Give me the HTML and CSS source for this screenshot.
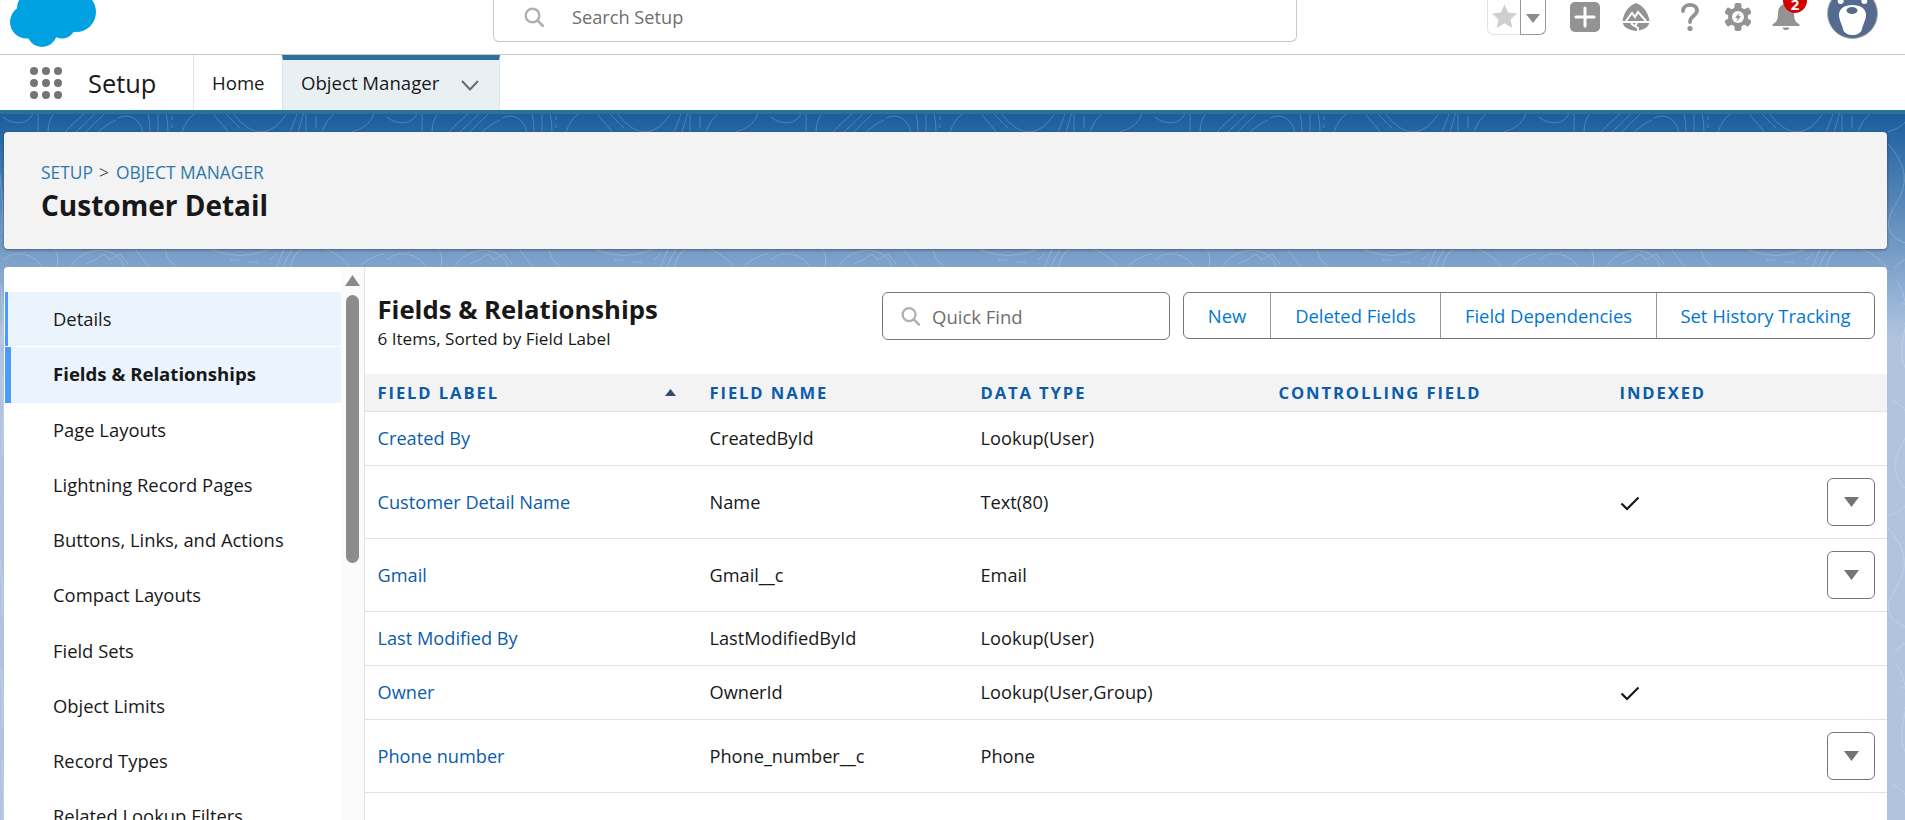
FILE: index.html
```html
<!DOCTYPE html>
<html lang="en">
<head>
<meta charset="utf-8">
<title>Customer Detail | Object Manager | Setup</title>
<link rel="stylesheet" href="styles.css">
</head>
<body>
<header class="topbar">
  <svg class="logo" viewBox="10 0 87 47" aria-label="Salesforce"><g fill="#00a1e0"><circle cx="26.500" cy="22" r="16.500"/><circle cx="42" cy="32" r="15"/><circle cx="62" cy="25" r="13.500"/><circle cx="76" cy="12" r="20"/><circle cx="50" cy="6" r="20"/><circle cx="33" cy="8" r="16"/></g></svg>
  <div class="global-search">
    <svg class="search-icon" viewBox="0 0 20 20"><circle cx="8.500" cy="8.500" r="6.800" fill="none" stroke="#b0b0b0" stroke-width="2.400"/><path d="M13.500 13.500 19 19" stroke="#b0b0b0" stroke-width="2.600" stroke-linecap="round"/></svg>
    <span>Search Setup</span>
  </div>
  <div class="actions">
    <div class="fav">
      <span class="fav-star"><svg viewBox="0 0 24 24"><path fill="#cfcfcf" d="M12 .5l3.600 7.600 8.400 1-6.200 5.700 1.700 8.300L12 18.400l-7.500 4.700 1.700-8.300L0 9.100l8.400-1z"/></svg></span>
      <span class="fav-menu"><svg viewBox="0 0 14 9"><path fill="#8c8c8c" d="M0 0h14L7 9z"/></svg></span>
    </div>
    <svg class="act act-plus" viewBox="0 0 30 30"><rect width="30" height="30" rx="5" fill="#939393"/><path d="M15 6v18M6 15h18" stroke="#fff" stroke-width="3" stroke-linecap="round"/></svg>
    <svg class="act act-trail" viewBox="0 0 28 28"><path fill="#939393" d="M14 0C20 2 26 8 27.500 18H.5C2 8 8 2 14 0z"/><path fill="#939393" d="M.8 20H27.200C26 25 21 27 14 28 7 27 2 25 .8 20z"/><path fill="none" stroke="#fff" stroke-width="2" d="M4 18l6-8 3 4 3-5 8 9M15 20l-2 3 3 2v3M9 20l3 3"/></svg>
    <svg class="act act-help" viewBox="0 0 18 28"><path fill="none" stroke="#939393" stroke-width="3.800" stroke-linecap="round" d="M2 8C2 0 16 0 16 7.500 16 13 9 12.500 9 19"/><circle cx="9" cy="25.500" r="2.600" fill="#939393"/></svg>
    <svg class="act act-gear" viewBox="0 0 26 28"><g fill="#939393"><rect x="9.500" y="0" width="7" height="28" rx="2"/><rect x="9.500" y="0" width="7" height="28" rx="2" transform="rotate(60 13 14)"/><rect x="9.500" y="0" width="7" height="28" rx="2" transform="rotate(120 13 14)"/><circle cx="13" cy="14" r="10"/></g><circle cx="13" cy="14" r="6" fill="#fff"/><path fill="#939393" d="M14.500 9.500 10 15h2.500l-1 3.800L16 13h-2.500z"/></svg>
    <div class="bell">
      <svg class="bell-icon" viewBox="0 0 28 26"><path fill="#939393" d="M14 0c5 0 8 4 8 9 0 6 1 9 5 11 1 .5 1 2-.5 2H1.500C0 22 0 20.500 1 20c4-2 5-5 5-11 0-5 3-9 8-9z"/><path fill="#939393" d="M10.500 23.500h7c-.5 2-2 2.500-3.500 2.500s-3-.5-3.500-2.500z"/></svg>
      <span class="badge">2</span>
    </div>
    <svg class="act act-avatar" viewBox="0 0 51 39"><circle cx="25.500" cy="13.500" r="25" fill="#546a8e" stroke="#a9adb3" stroke-width="1"/><circle cx="13.700" cy="1" r="3" fill="#fff"/><circle cx="37.300" cy="1" r="3" fill="#fff"/><path fill="#fff" d="M25.500 5C34 5 39 9 39 15 39 20 36 24 35 29 34 33 30 35 25.500 35 21 35 17 33 16 29 15 24 12 20 12 15 12 9 17 5 25.500 5z"/><ellipse cx="25" cy="10.500" rx="5.500" ry="3.500" fill="#546a8e"/></svg>
  </div>
</header>

<nav class="navbar">
  <svg class="launcher" viewBox="0 0 32 32"><g fill="#757575"><circle cx="4" cy="4" r="4"/><circle cx="16" cy="4" r="4"/><circle cx="28" cy="4" r="4"/><circle cx="4" cy="16" r="4"/><circle cx="16" cy="16" r="4"/><circle cx="28" cy="16" r="4"/><circle cx="4" cy="28" r="4"/><circle cx="16" cy="28" r="4"/><circle cx="28" cy="28" r="4"/></g></svg>
  <span class="app-name">Setup</span>
  <a class="tab tab-home">Home</a>
  <a class="tab tab-active">Object Manager<svg class="chev" viewBox="0 0 18 11"><path d="M1 1l8 8.500L17 1" fill="none" stroke="#6b6b6b" stroke-width="2"/></svg></a>
</nav>

<main class="backdrop">
  <svg class="contours" width="100%" height="100%" aria-hidden="true">
    <defs>
      <pattern id="topo" width="384" height="384" patternUnits="userSpaceOnUse">
        <g fill="none" stroke="#fff" stroke-opacity=".2" stroke-width="1">
          <path d="M3 3Q12 11 24 8 32 5 33 -2M38 -2V18M48 18Q48 6 55 -2M65 18Q74 8 86 -2M76 18L97 -2M86 18L106 -2M98 18Q108 9 116 6M118 4Q126 0 134 4Q140 8 143 18"/>
          <path d="M148 -2Q150 8 150 18M158 -2V18M166 -2Q168 8 168 18M172 2V6M172 10V14M182 18Q186 6 196 -2M212 -2L228 18M224 -2L240 14M232 -2Q262 38 288 -2M290 18L298 -2M298 18L304 -2M306 18V-2M316 2V14M322 18Q326 6 336 -2M352 18Q372 12 374 -2"/>
          <path d="M3 146Q14 136 30 142 42 148 44 160M55 135Q60 145 56 154M70 154Q78 138 100 136 122 138 124 154M86 150Q96 146 104 140L110 146 120 140 128 150"/>
          <path d="M135 135L150 154M165 135Q166 146 178 154M210 135Q240 148 270 135M230 146H240M248 148H258M270 146L276 140M284 135L276 154M292 135L282 154M302 135Q292 142 290 154M326 135Q348 146 350 154M358 154Q370 142 384 140"/>
          <path d="M0 60Q4 90 2 120M1 170Q4 200 2 230M2 260Q5 300 2 340M352 30Q380 60 360 90T372 130M360 165Q376 190 368 220T380 270M356 286Q384 300 366 330T376 380M364 190H378M368 210H376"/>
        </g>
      </pattern>
    </defs>
    <rect width="100%" height="100%" fill="url(#topo)"/>
  </svg>

  <section class="page-head">
    <div class="crumbs"><a>SETUP</a><span class="crumb-sep">&gt;</span><a>OBJECT MANAGER</a></div>
    <h1>Customer Detail</h1>
  </section>

  <section class="panel">
    <aside class="side">
      <ul class="side-list">
        <li class="side-item is-hover">Details</li>
        <li class="side-item is-active">Fields &amp; Relationships</li>
        <li class="side-item">Page Layouts</li>
        <li class="side-item">Lightning Record Pages</li>
        <li class="side-item">Buttons, Links, and Actions</li>
        <li class="side-item">Compact Layouts</li>
        <li class="side-item">Field Sets</li>
        <li class="side-item">Object Limits</li>
        <li class="side-item">Record Types</li>
        <li class="side-item">Related Lookup Filters</li>
      </ul>
      <div class="scroll">
        <svg class="scroll-up" viewBox="0 0 15 11"><path d="M7.500 0 15 11H0z" fill="#8a8a8a"/></svg>
        <div class="scroll-thumb"></div>
      </div>
    </aside>

    <div class="content">
      <div class="toolbar">
        <div class="title-block">
          <h2>Fields &amp; Relationships</h2>
          <p>6 Items, Sorted by Field Label</p>
        </div>
        <div class="quick-find">
          <svg class="qf-icon" viewBox="0 0 20 20"><circle cx="8.500" cy="8.500" r="6.800" fill="none" stroke="#b0b0b0" stroke-width="2.400"/><path d="M13.500 13.500 19 19" stroke="#b0b0b0" stroke-width="2.600" stroke-linecap="round"/></svg>
          <span>Quick Find</span>
        </div>
        <div class="btn-group">
          <a class="btn">New</a>
          <a class="btn">Deleted Fields</a>
          <a class="btn">Field Dependencies</a>
          <a class="btn">Set History Tracking</a>
        </div>
      </div>

      <table class="grid">
        <colgroup><col class="c1"><col class="c2"><col class="c3"><col class="c4"><col class="c5"><col class="c6"></colgroup>
        <thead>
          <tr>
            <th><span class="th-sort">FIELD LABEL<svg class="sort" viewBox="0 0 11 7"><path d="M5.500 0 11 7H0z" fill="#2e4f75"/></svg></span></th>
            <th>FIELD NAME</th><th>DATA TYPE</th><th>CONTROLLING FIELD</th><th>INDEXED</th><th></th>
          </tr>
        </thead>
        <tbody>
          <tr class="r-s"><td><a>Created By</a></td><td>CreatedById</td><td>Lookup(User)</td><td></td><td></td><td></td></tr>
          <tr class="r-l"><td><a>Customer Detail Name</a></td><td>Name</td><td>Text(80)</td><td></td><td><svg class="check" viewBox="0 0 20 15"><path d="M1.500 7.500 7 13 18.500 1.500" fill="none" stroke="#181818" stroke-width="2.200"/></svg></td><td><span class="row-btn"><svg viewBox="0 0 15 10"><path d="M0 0h15L7.500 10z" fill="#747474"/></svg></span></td></tr>
          <tr class="r-l"><td><a>Gmail</a></td><td>Gmail__c</td><td>Email</td><td></td><td></td><td><span class="row-btn"><svg viewBox="0 0 15 10"><path d="M0 0h15L7.500 10z" fill="#747474"/></svg></span></td></tr>
          <tr class="r-s"><td><a>Last Modified By</a></td><td>LastModifiedById</td><td>Lookup(User)</td><td></td><td></td><td></td></tr>
          <tr class="r-s"><td><a>Owner</a></td><td>OwnerId</td><td>Lookup(User,Group)</td><td></td><td><svg class="check" viewBox="0 0 20 15"><path d="M1.500 7.500 7 13 18.500 1.500" fill="none" stroke="#181818" stroke-width="2.200"/></svg></td><td></td></tr>
          <tr class="r-l"><td><a>Phone number</a></td><td>Phone_number__c</td><td>Phone</td><td></td><td></td><td><span class="row-btn"><svg viewBox="0 0 15 10"><path d="M0 0h15L7.500 10z" fill="#747474"/></svg></span></td></tr>
        </tbody>
      </table>
    </div>
  </section>
</main>
</body>
</html>
```

FILE: styles.css
```css
* { box-sizing: border-box; }
html, body { margin: 0; height: 820px; overflow: hidden; }
body {
  display: flex;
  flex-direction: column;
  background: #fff;
  color: #181818;
  font-family: "Open Sans", "Noto Sans", Arial, sans-serif;
  font-size: 18px;
}
svg { display: block; }
a { color: inherit; text-decoration: none; }
h1, h2, p, ul { margin: 0; padding: 0; }

/* top bar */
.topbar {
  flex: none;
  height: 55px;
  display: flex;
  align-items: flex-start;
  padding-left: 10px;
  border-bottom: 1px solid #c9c9c9;
}
.logo { width: 87px; height: 47px; flex: none; }
.global-search {
  flex: none;
  width: 804px;
  height: 42px;
  margin-left: 396px;
  display: flex;
  align-items: flex-start;
  padding: 7px 0 0 30px;
  border: 1px solid #c9c9c9;
  border-top: 0;
  border-radius: 0 0 6px 6px;
  color: #706e6b;
  font-size: 18.200px;
  line-height: 20px;
}
.search-icon { width: 20px; height: 20px; margin-right: 28px; }
.actions { display: flex; align-items: flex-start; margin-left: 190px; }
.fav {
  display: flex;
  width: 59px;
  height: 35px;
  margin-right: 24px;
}
.fav-star {
  width: 33px;
  border: 1px solid #e4e4e4;
  border-top: 0;
  border-right: 0;
  border-radius: 0 0 0 6px;
  padding: 4px 0 0 4px;
}
.fav-star svg { width: 25px; height: 25px; }
.fav-menu {
  width: 26px;
  border: 1px solid #9a9a9a;
  border-top: 0;
  border-radius: 0 0 6px 0;
  padding: 14px 0 0 5px;
}
.fav-menu svg { width: 14px; height: 9px; }
.act { flex: none; }
.act-plus { width: 30px; height: 30px; margin-top: 2px; margin-right: 22px; }
.act-trail { width: 28px; height: 28px; margin-top: 3px; margin-right: 31px; }
.act-help { width: 18px; height: 28px; margin-top: 3px; margin-right: 26px; }
.act-gear { width: 26px; height: 28px; margin-top: 3px; margin-right: 21px; }
.bell { position: relative; width: 28px; height: 31px; margin-right: 27px; }
.bell-icon { width: 28px; height: 26px; margin-top: 4px; }
.badge {
  position: absolute;
  left: 11px;
  top: -12px;
  width: 24px;
  height: 25px;
  padding-top: 7px;
  border-radius: 50%;
  background: #d30000;
  color: #fff;
  font-size: 15px;
  font-weight: 700;
  line-height: 18px;
  text-align: center;
}
.act-avatar { width: 51px; height: 39px; }

/* app nav */
.navbar {
  flex: none;
  height: 59px;
  display: flex;
  align-items: stretch;
  border-bottom: 4px solid #2b719c;
}
.launcher { width: 32px; height: 32px; margin: 12px 0 0 30px; }
.app-name {
  width: 105px;
  margin-left: 26px;
  padding-top: 12px;
  font-size: 25.400px;
  line-height: 32px;
}
.tab {
  display: flex;
  align-items: center;
  border-left: 1px solid #e3e3e3;
  font-size: 18.600px;
}
.tab-home { width: 89px; padding-left: 18px; }
.tab-active {
  width: 218px;
  padding-left: 18px;
  background: #e9f0f4;
  border-top: 5px solid #2b719c;
  border-right: 1px solid #dfe5e9;
  padding-bottom: 5px;
}
.chev { width: 18px; height: 11px; margin: 5px 0 0 22px; }

/* backdrop */
.backdrop {
  position: relative;
  flex: 1;
  min-height: 0;
  display: flex;
  flex-direction: column;
  padding: 18px 18px 0 4px;
  background: linear-gradient(#1b5e9e 0, #b0c4e0 225px);
  overflow: hidden;
}
.contours { position: absolute; inset: 0; }

.page-head {
  position: relative;
  flex: none;
  height: 117px;
  padding: 28px 37px 0;
  background: #f3f3f3;
  border-radius: 4px;
  box-shadow: 0 1px 3px rgba(0, 0, 0, .4);
}
.crumbs { color: #2e78ab; font-size: 17.400px; line-height: 24px; }
.crumb-sep { color: #5c5c5c; margin: 0 7px 0 6px; }
h1 { font-size: 28px; line-height: 38px; font-weight: 700; margin-top: 2px; }

.panel {
  position: relative;
  flex: 1;
  min-height: 0;
  display: flex;
  margin-top: 18px;
  background: #fff;
  border-radius: 4px 4px 0 0;
  overflow: hidden;
}

/* sidebar */
.side {
  flex: none;
  width: 361px;
  display: flex;
  border-right: 1px solid #e3e3e3;
}
.side-list { list-style: none; width: 337px; padding: 25px 0 0 1px; }
.side-item {
  height: 55.250px;
  line-height: 54px;
  padding-left: 48px;
  font-size: 18.400px;
  white-space: nowrap;
}
.is-hover { background: #ebf4fd; box-shadow: inset 3px 0 #4a9bff; height: 54px; margin-bottom: 1.250px; }
.is-active { background: #ebf4fd; box-shadow: inset 6px 0 #4a9bff; font-size: 18.600px; font-weight: 700; }
.scroll { flex: 1; background: #fbfbfb; padding: 8px 0 0 4px; }
.scroll-up { width: 15px; height: 11px; }
.scroll-thumb { width: 13px; height: 268px; margin: 9px 0 0 1px; background: #8c8c8c; border-radius: 7px; }

/* content */
.content { flex: 1; min-width: 0; }
.toolbar {
  height: 107px;
  display: flex;
  align-items: flex-start;
  padding: 25px 12px 0 12.500px;
}
.title-block { flex: none; width: 504.500px; }
h2 { font-size: 25.700px; line-height: 35px; font-weight: 700; white-space: nowrap; }
.title-block p { font-size: 17.100px; line-height: 24px; }
.quick-find {
  flex: none;
  width: 288px;
  height: 48px;
  display: flex;
  align-items: center;
  padding-left: 18px;
  border: 1px solid #767676;
  border-radius: 6px;
  color: #706e6b;
  font-size: 18.500px;
}
.qf-icon { width: 19px; height: 20px; margin-right: 12px; }
.btn-group {
  flex: none;
  width: 692px;
  height: 47px;
  margin-left: 13px;
  display: grid;
  grid-template-columns: 86px 170px 216px 1fr;
  border: 1px solid #767676;
  border-radius: 6px;
}
.btn {
  display: flex;
  align-items: center;
  justify-content: center;
  border-left: 1px solid #9a9a9a;
  color: #0176d3;
  font-size: 18.400px;
}
.btn:first-child { border-left: 0; }

/* table */
.grid { width: 100%; border-collapse: collapse; table-layout: fixed; }
.c1 { width: 332px; }
.c2 { width: 271px; }
.c3 { width: 298px; }
.c4 { width: 341px; }
.c5 { width: 207px; }
.grid th {
  height: 37px;
  padding: 0 0 0 12.500px;
  background: #f3f3f3;
  border-bottom: 1px solid #e3e3e3;
  color: #0b5cab;
  font-size: 16.600px;
  font-weight: 700;
  letter-spacing: 1.900px;
  text-align: left;
  white-space: nowrap;
}
.th-sort { display: flex; align-items: center; justify-content: space-between; padding-right: 21px; }
.sort { width: 11px; height: 7px; }
.grid td {
  padding: 0 0 0 12.500px;
  border-bottom: 1px solid #e3e3e3;
  font-size: 18.200px;
  white-space: nowrap;
}
.grid td a { color: #0b5cab; }
.r-s td { height: 54px; }
.r-l td { height: 73px; }
.check { width: 20px; height: 15px; margin-top: 3px; }
.grid td:last-child { padding: 0 12px 0 0; }
.row-btn {
  display: flex;
  align-items: center;
  justify-content: center;
  width: 48px;
  height: 48px;
  margin-left: auto;
  border: 1px solid #767676;
  border-radius: 6px;
}
.row-btn svg { width: 15px; height: 10px; }
```
